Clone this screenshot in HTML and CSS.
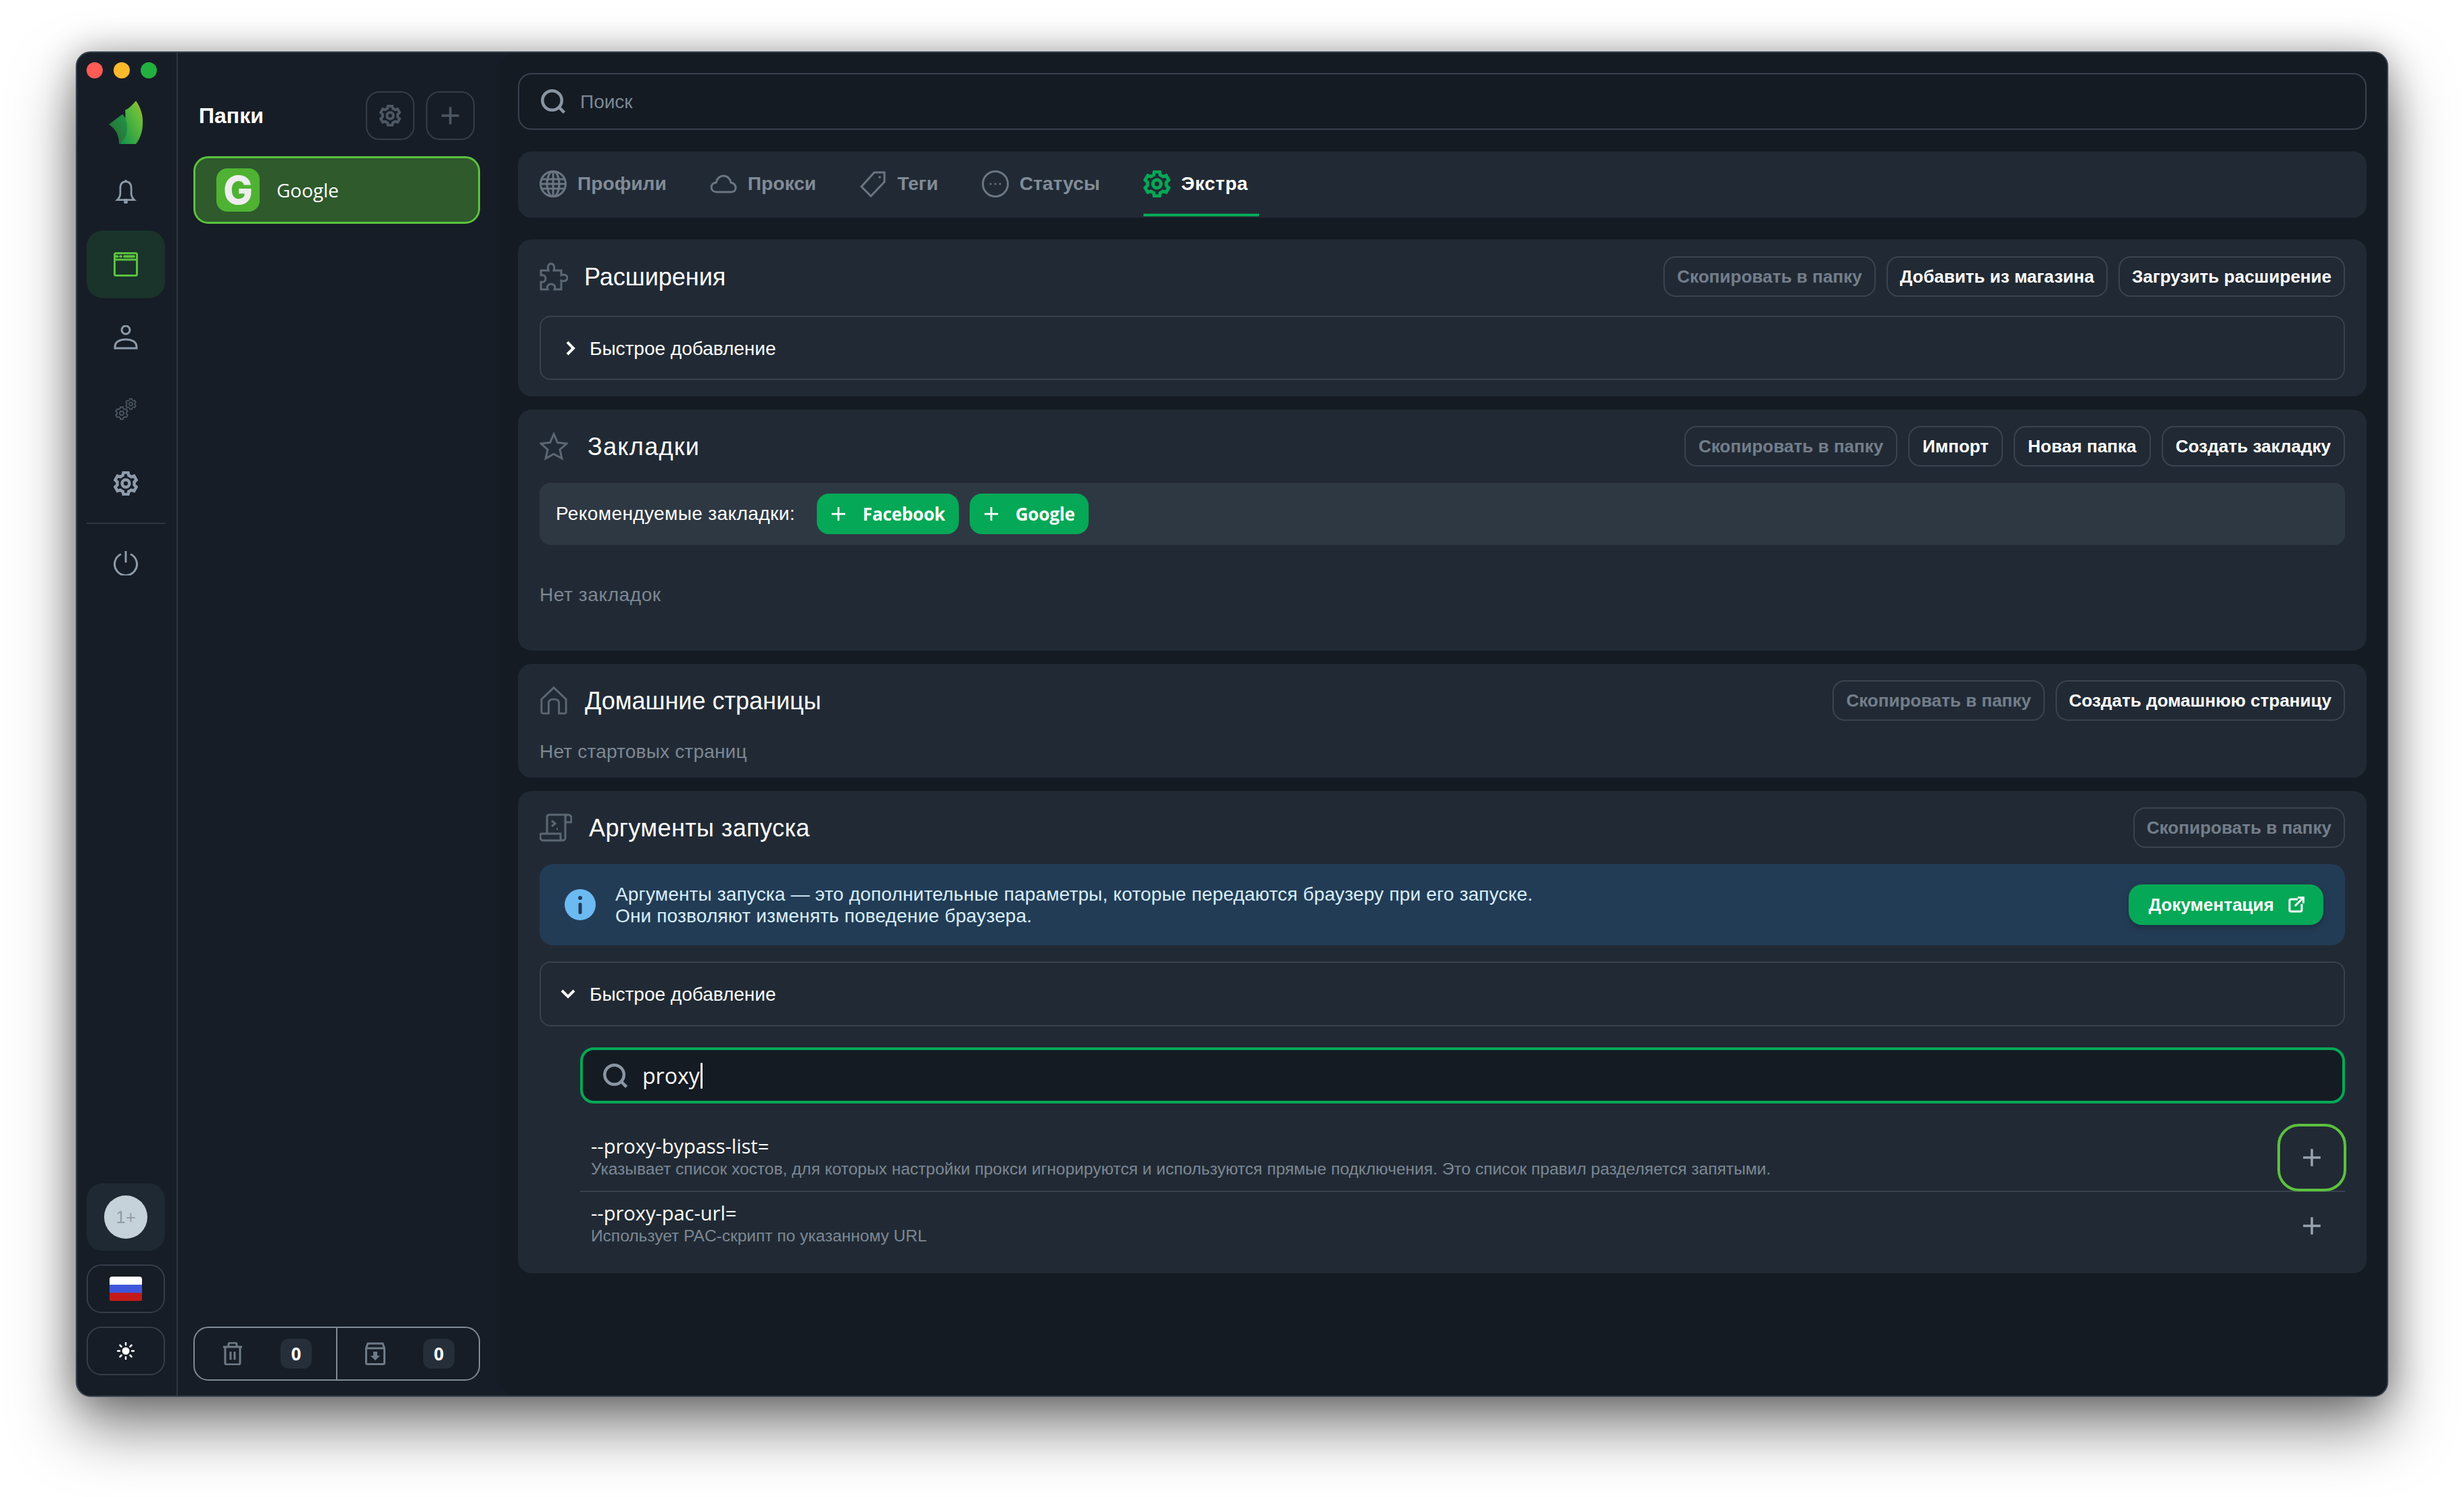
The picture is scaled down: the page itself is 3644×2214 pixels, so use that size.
FILE: index.html
```html
<!DOCTYPE html>
<html lang="ru">
<head>
<meta charset="utf-8">
<title>Экстра</title>
<link rel="stylesheet" href="styles.css">
</head>
<body>
<svg class="defs" aria-hidden="true">
  <defs>
    <linearGradient id="leaf" x1="1" y1="0" x2="0" y2="1"><stop offset="0" stop-color="#b5b62c"/><stop offset=".3" stop-color="#62bd3a"/><stop offset="1" stop-color="#0f8f4d"/></linearGradient>
    <linearGradient id="leafb" x1="1" y1="0" x2="0" y2="1"><stop offset="0" stop-color="#1f9a48"/><stop offset="1" stop-color="#2c5f33"/></linearGradient>
    <symbol id="i-gear" viewBox="0 0 24 24"><path d="M9.71 1.24L14.29 1.24L14.91 4.01L17.46 5.49L20.17 4.64L22.46 8.6L20.37 10.52L20.37 13.48L22.46 15.4L20.17 19.36L17.46 18.51L14.91 19.99L14.29 22.76L9.71 22.76L9.09 19.99L6.54 18.51L3.83 19.36L1.54 15.4L3.63 13.48L3.63 10.52L1.54 8.6L3.83 4.64L6.54 5.49L9.09 4.01Z"/><circle cx="12" cy="12" r="3.6"/></symbol>
    <symbol id="i-plus" viewBox="0 0 24 24"><path d="M12 1V23M1 12H23"/></symbol>
    <symbol id="i-search" viewBox="0 0 24 24"><circle cx="11" cy="11" r="9.5"/><path d="M17.8 17.8L23 23"/></symbol>
  </defs>
</svg>

<div class="window">
  <aside class="rail">
    <div class="lights"><span class="light red"></span><span class="light amber"></span><span class="light green"></span></div>
    <div class="logo">
      <svg viewBox="0 0 51 65" width="51" height="65"><path fill="url(#leaf)" d="M40 0C47 10 51 22 50 34C50 46 46 56 40 64L16 64C24 56 26 44 24 34C24 26 25 20 24 14C30 11 35 6 40 0Z"/><path fill="url(#leafb)" d="M20 20C24 24 27 30 27 40C27 50 24 58 15 64C15 50 10 42 0 35Z"/></svg>
    </div>
    <nav class="rail-nav">
      <a class="rail-item"><svg class="ico-36 stroke-rail" viewBox="0 0 36 40"><path d="M18 4C11 4 9 9 9 15V24C9 28 7 31 4 34H32C29 31 27 28 27 24V15C27 9 25 4 18 4Z"/><path d="M18 1V4"/><path class="thick" d="M18 35V38"/></svg></a>
      <a class="rail-item active"><svg class="ico-36 stroke-active" viewBox="0 0 36 36"><rect x="1.5" y="1.5" width="33" height="33" rx="2"/><path d="M2 11H34"/><path class="thick-b" d="M4.5 6.2H5.5M10 6.2H11M16 6.2H30"/></svg></a>
      <a class="rail-item"><svg class="ico-36 stroke-rail" viewBox="0 0 36 36"><circle cx="18" cy="7" r="6"/><path d="M2 34V32C2 24 10 21 18 21C26 21 34 24 34 32V34Z"/></svg></a>
      <a class="rail-item"><svg class="ico-gears stroke-dim" viewBox="0 0 32 36"><use href="#i-gear" x="0" y="12" width="20" height="20"/><use href="#i-gear" x="15" y="0" width="17" height="17"/></svg></a>
      <a class="rail-item"><svg class="ico-36 stroke-rail" viewBox="0 0 24 24"><use href="#i-gear"/></svg></a>
      <div class="rail-sep"></div>
      <a class="rail-item power"><svg class="ico-36 stroke-rail" viewBox="0 0 36 36"><path d="M11 4.5A16.5 16.5 0 1 0 25 4.5"/><path d="M18 0V17"/></svg></a>
    </nav>
    <div class="rail-bottom">
      <div class="avatar-box"><div class="avatar">1+</div></div>
      <div class="rail-btn"><div class="flag"><span class="f-w"></span><span class="f-b"></span><span class="f-r"></span></div></div>
      <div class="rail-btn">
        <svg class="ico-sun" viewBox="0 0 26 26"><circle class="sun-core" cx="13" cy="13" r="5.500"/><path d="M13 1V4M13 22V25M1 13H4M22 13H25M4.500 4.500L6.600 6.600M19.400 19.400L21.500 21.500M4.500 21.500L6.600 19.400M19.400 6.600L21.500 4.500"/></svg>
      </div>
    </div>
  </aside>

  <aside class="folders">
    <div class="folders-head">
      <h2 class="folders-title">Папки</h2>
      <div class="folders-actions">
        <button class="square-btn"><svg class="ico-32 stroke-dim" viewBox="0 0 24 24"><use href="#i-gear"/></svg></button>
        <button class="square-btn"><svg class="ico-28 stroke-dim" viewBox="0 0 24 24"><use href="#i-plus"/></svg></button>
      </div>
    </div>
    <div class="folder-item">
      <span class="folder-icon">G</span>
      <span class="folder-name">Google</span>
    </div>
    <div class="bin">
      <div class="bin-cell">
        <svg class="ico-bin stroke-bin" viewBox="0 0 30 34"><path d="M1 7H29M9 7V3C9 2 10 1 11 1H19C20 1 21 2 21 3V7M4 7V31C4 32 5 33 6 33H24C25 33 26 32 26 31V7M12 14V26M18 14V26"/></svg>
        <span class="chip">0</span>
      </div>
      <div class="bin-cell">
        <svg class="ico-bin stroke-bin" viewBox="0 0 30 34"><path d="M1.5 9V31C1.5 32 2.5 32.5 3.5 32.5H26.500C27.500 32.500 28.500 32 28.500 31V9L26 2H4ZM2 9H28"/><path class="fill-bin" d="M12 14H18V20H22L15 27L8 20H12Z"/></svg>
        <span class="chip">0</span>
      </div>
    </div>
  </aside>

  <main class="main">
    <div class="search">
      <svg class="ico-36 stroke-search" viewBox="0 0 24 24"><use href="#i-search"/></svg>
      <span class="search-ph">Поиск</span>
    </div>

    <nav class="tabs">
      <a class="tab">
        <svg class="ico-40 stroke-tab" viewBox="0 0 40 40"><circle cx="20" cy="20" r="18.500"/><ellipse cx="20" cy="20" rx="9" ry="18.500"/><path d="M3 13H37M3 27H37M20 2V38M1.500 20H38.500"/></svg>
        <span>Профили</span>
      </a>
      <a class="tab">
        <svg class="ico-40 stroke-tab" viewBox="0 0 40 40"><path d="M10 32C5 32 2 29 2 25C2 21 5 18 9 18C10 12 15 8 20 8C26 8 30 13 31 18C35 19 38 22 38 26C38 30 35 32 31 32Z"/></svg>
        <span>Прокси</span>
      </a>
      <a class="tab">
        <svg class="ico-40 stroke-tab" viewBox="0 0 40 40"><path d="M37 3L22 3L3 24L17 38L37 17Z"/><circle class="fill-tab" cx="30" cy="10" r="1.800"/></svg>
        <span>Теги</span>
      </a>
      <a class="tab">
        <svg class="ico-40 stroke-tab" viewBox="0 0 40 40"><circle cx="20" cy="20" r="18.500"/><circle class="fill-tab" cx="13" cy="20" r="1.500"/><circle class="fill-tab" cx="20" cy="20" r="1.500"/><circle class="fill-tab" cx="27" cy="20" r="1.500"/></svg>
        <span>Статусы</span>
      </a>
      <a class="tab tab-active">
        <svg class="ico-40 stroke-tab-on" viewBox="0 0 24 24"><use href="#i-gear"/></svg>
        <span>Экстра</span>
      </a>
    </nav>

    <section class="card card-ext">
      <header class="card-head">
        <div class="card-title">
          <svg class="ico-42 stroke-head" viewBox="0 0 42 42"><path d="M2 12H13C11 5 14 2 17 2C20 2 23 5 21 12H32V19C38 17 41 20 41 23C41 26 38 29 32 27V40H22C24 35 21 32 17 32C13 32 10 35 12 40H2V29C7 30 9 27 9 24C9 21 7 18 2 19Z"/></svg>
          <h3>Расширения</h3>
        </div>
        <div class="card-actions">
          <button class="btn btn-muted">Скопировать в папку</button>
          <button class="btn">Добавить из магазина</button>
          <button class="btn">Загрузить расширение</button>
        </div>
      </header>
      <div class="expander expander-top">
        <svg class="ico-chev stroke-white" viewBox="0 0 16 24"><path d="M3 3L12 12L3 21"/></svg>
        <span>Быстрое добавление</span>
      </div>
    </section>

    <section class="card">
      <header class="card-head">
        <div class="card-title">
          <svg class="ico-42 stroke-head" viewBox="0 0 42 40"><path d="M21 2L26.500 14.500L40 16L30 25L33 38L21 31.500L9 38L12 25L2 16L15.500 14.500Z"/></svg>
          <h3 class="title-star">Закладки</h3>
        </div>
        <div class="card-actions actions-roomy">
          <button class="btn btn-muted">Скопировать в папку</button>
          <button class="btn">Импорт</button>
          <button class="btn">Новая папка</button>
          <button class="btn">Создать закладку</button>
        </div>
      </header>
      <div class="recommend">
        <span class="recommend-label">Рекомендуемые закладки:</span>
        <button class="btn-green"><svg class="ico-22 stroke-white" viewBox="0 0 24 24"><use href="#i-plus"/></svg><span class="latin-b">Facebook</span></button>
        <button class="btn-green"><svg class="ico-22 stroke-white" viewBox="0 0 24 24"><use href="#i-plus"/></svg><span class="latin-b">Google</span></button>
      </div>
      <p class="empty empty-bookmarks">Нет закладок</p>
    </section>

    <section class="card">
      <header class="card-head">
        <div class="card-title">
          <svg class="ico-42 stroke-head" viewBox="0 0 42 44"><path d="M21 2L40 20V40C40 41 39 42 38 42H29V26C29 22 26 20 21 20C16 20 13 22 13 26V42H4C3 42 2 41 2 40V20Z"/></svg>
          <h3 class="title-home">Домашние страницы</h3>
        </div>
        <div class="card-actions">
          <button class="btn btn-muted">Скопировать в папку</button>
          <button class="btn">Создать домашнюю страницу</button>
        </div>
      </header>
      <p class="empty empty-home">Нет стартовых страниц</p>
    </section>

    <section class="card card-args">
      <header class="card-head">
        <div class="card-title">
          <svg class="ico-48 stroke-head" viewBox="0 0 48 42"><path d="M11 30V5C11 3 13 2 15 2H42C45 2 47 4 47 7V13H38V6C38 3 40 2 42 2M38 13V36C38 39 36 40 33 40H5C3 40 1 38 1 36V32C1 31 2 30 3 30H31V37C31 39 33 40 34 40"/><path d="M18 11L23 15L18 19M25 23H27"/></svg>
          <h3 class="title-args">Аргументы запуска</h3>
        </div>
        <div class="card-actions">
          <button class="btn btn-muted">Скопировать в папку</button>
        </div>
      </header>
      <div class="info">
        <svg class="ico-46" viewBox="0 0 46 46"><circle class="info-bg" cx="23" cy="23" r="23"/><circle class="info-fg" cx="23" cy="13" r="3"/><rect class="info-fg" x="20.500" y="20" width="5" height="17" rx="2.500"/></svg>
        <p class="info-text">Аргументы запуска — это дополнительные параметры, которые передаются браузеру при его запуске.<br>Они позволяют изменять поведение браузера.</p>
        <button class="btn-doc">
          <span>Документация</span>
          <svg class="ico-24 stroke-white" viewBox="0 0 24 24"><path d="M14 4H4C2.500 4 2 4.500 2 6V20C2 21.500 2.500 22 4 22H18C19.500 22 20 21.500 20 20V11M10 14L22 2M14 1.500H22.500V10"/></svg>
        </button>
      </div>
      <div class="expander">
        <svg class="ico-chev-d stroke-white" viewBox="0 0 24 16"><path d="M3 3L12 12L21 3"/></svg>
        <span>Быстрое добавление</span>
      </div>
      <div class="args">
        <div class="arg-search">
          <svg class="ico-36 stroke-search" viewBox="0 0 24 24"><use href="#i-search"/></svg>
          <span class="arg-value">proxy</span><span class="caret"></span>
        </div>
        <div class="arg-row arg-row-first">
          <div class="arg-text">
            <div class="arg-name">--proxy-bypass-list=</div>
            <div class="arg-desc">Указывает список хостов, для которых настройки прокси игнорируются и используются прямые подключения. Это список правил разделяется запятыми.</div>
          </div>
          <button class="arg-add arg-add-focus"><svg class="ico-28 stroke-plus" viewBox="0 0 24 24"><use href="#i-plus"/></svg></button>
        </div>
        <div class="arg-row arg-row-last">
          <div class="arg-text">
            <div class="arg-name">--proxy-pac-url=</div>
            <div class="arg-desc">Использует PAC-скрипт по указанному URL</div>
          </div>
          <button class="arg-add"><svg class="ico-28 stroke-plus" viewBox="0 0 24 24"><use href="#i-plus"/></svg></button>
        </div>
      </div>
    </section>
  </main>
</div>
</body>
</html>
```
FILE: styles.css
```css
* { box-sizing: border-box; }
html, body { margin: 0; height: 100%; }
body {
  background: #fff;
  padding: 76px 112px 148px;
  font-family: "Liberation Sans", Arial, sans-serif;
  font-size: 28px;
  color: #fff;
  overflow: hidden;
}
.defs { position: absolute; width: 0; height: 0; }
h2, h3, p { margin: 0; font-weight: normal; }
button { font-family: inherit; color: inherit; background: none; padding: 0; margin: 0; border: 0; }
svg { display: block; flex: none; fill: none; stroke-width: 3; }

.ico-22 { width: 22px; height: 22px; }
.ico-24 { width: 24px; height: 24px; }
.ico-28 { width: 28px; height: 28px; }
.ico-32 { width: 32px; height: 32px; }
.ico-36 { width: 36px; height: 36px; }
.ico-40 { width: 40px; height: 40px; }
.ico-42 { width: 42px; height: 42px; }
.ico-46 { width: 46px; height: 46px; }
.ico-48 { width: 48px; height: 42px; }
.ico-gears { width: 32px; height: 36px; stroke-width: 2.200; }
.ico-bin { width: 30px; height: 34px; }
.ico-sun { width: 26px; height: 26px; stroke: #fff; stroke-linecap: round; stroke-width: 2.500; }
.sun-core { fill: #fff; stroke: none; }
.ico-chev { width: 16px; height: 24px; stroke-width: 4; }
.ico-chev-d { width: 24px; height: 16px; stroke-width: 4; }

.stroke-rail { stroke: #8e9baa; }
.stroke-active { stroke: #5cc13e; }
.stroke-dim { stroke: #4d5763; }
.stroke-bin { stroke: #6f7a87; }
.stroke-search { stroke: #8a95a2; }
.stroke-tab { stroke: #6a7582; }
.stroke-tab-on { stroke: #05a856; }
.stroke-head { stroke: #5c6774; }
.stroke-white { stroke: #fff; }
.stroke-plus { stroke: #98a3af; }
.fill-bin { fill: #6f7a87; stroke: none; }
.fill-tab { fill: #6a7582; stroke: none; }
.thick { stroke-width: 6; stroke-linecap: round; }
.thick-b { stroke-width: 4; stroke-linecap: round; }
.info-bg { fill: #6cbaf2; }
.info-fg { fill: #1f3c56; }

.window {
  display: flex;
  height: 100%;
  background: #161d26;
  border: 2px solid #3a424d;
  border-radius: 22px;
  box-shadow: 0 44px 90px rgba(0, 0, 0, .5), 0 0 50px rgba(0, 0, 0, .28);
  overflow: hidden;
}

/* Rail */
.rail {
  width: 149px;
  flex: none;
  padding: 0 17px 30px 14px;
  border-right: 2px solid #2c3540;
  display: flex;
  flex-direction: column;
  align-items: stretch;
}
.lights { display: flex; gap: 16px; margin-top: 14px; }
.light { width: 24px; height: 24px; border-radius: 50%; }
.red { background: #fe5a56; }
.amber { background: #fdb92c; }
.green { background: #22b13f; }
.logo { display: flex; justify-content: center; margin-top: 33px; height: 65px; }
.rail-nav { display: flex; flex-direction: column; gap: 8px; margin-top: 19px; }
.rail-item {
  height: 100px;
  border-radius: 24px;
  display: flex;
  align-items: center;
  justify-content: center;
}
.rail-item.active { background: #1a332b; }
.rail-sep { height: 2px; background: #2c3540; }
.rail-bottom { margin-top: auto; display: flex; flex-direction: column; gap: 20px; }
.avatar-box {
  height: 100px;
  border-radius: 24px;
  background: #1f2933;
  display: flex;
  align-items: center;
  justify-content: center;
}
.avatar {
  width: 64px;
  height: 64px;
  border-radius: 50%;
  background: #c6d2d9;
  color: #8f9ca6;
  font-size: 26px;
  display: flex;
  align-items: center;
  justify-content: center;
}
.rail-btn {
  height: 72px;
  border: 2.500px solid #343d49;
  border-radius: 22px;
  display: flex;
  align-items: center;
  justify-content: center;
}
.flag { width: 48px; height: 36px; border-radius: 4px 4px 2px 2px; overflow: hidden; display: flex; flex-direction: column; }
.flag span { flex: 1; }
.f-w { background: #fff; }
.f-b { background: #3f57da; }
.f-r { background: #c41a1a; }

/* Folders */
.folders {
  width: 472px;
  flex: none;
  padding: 57px 25px 22px 23px;
  display: flex;
  flex-direction: column;
  background: #161d26;
}
.folders-head { display: flex; align-items: center; justify-content: space-between; padding: 0 8px; height: 72px; }
.folders-title { font-size: 32px; font-weight: bold; }
.folders-actions { display: flex; gap: 17px; }
.square-btn {
  width: 72px;
  height: 72px;
  border: 2.500px solid #343d49;
  border-radius: 20px;
  display: flex;
  align-items: center;
  justify-content: center;
}
.folder-item {
  margin-top: 24px;
  height: 100px;
  background: #2e5a2c;
  border: 3px solid #5cc13e;
  border-radius: 22px;
  padding: 0 31px;
  display: flex;
  align-items: center;
  gap: 25px;
}
.folder-icon {
  width: 64px;
  height: 64px;
  border-radius: 16px;
  background: #4fb233;
  color: #eee;
  font-family: "Inter", sans-serif;
  font-weight: 800;
  font-size: 58px;
  display: flex;
  align-items: center;
  justify-content: center;
}
.folder-name { font-family: "Open Sans", sans-serif; font-size: 28px; }
.bin {
  margin-top: auto;
  height: 80px;
  border: 2.500px solid #7f8a96;
  border-radius: 22px;
  display: flex;
}
.bin-cell {
  flex: 1;
  display: flex;
  align-items: center;
  justify-content: space-between;
  padding: 0 36px 0 41px;
}
.bin-cell + .bin-cell { border-left: 2.500px solid #7f8a96; padding-left: 41px; }
.chip {
  width: 46px;
  height: 44px;
  border-radius: 12px;
  background: #262f39;
  font-family: "Open Sans", sans-serif;
  font-weight: 700;
  font-size: 26px;
  display: flex;
  align-items: center;
  justify-content: center;
}

/* Main */
.main {
  flex: 1;
  min-width: 0;
  padding: 30px 30px 0 31px;
  background: #141b23;
  border-radius: 30px 0 0 30px;
  display: flex;
  flex-direction: column;
  gap: 20px;
}
.search {
  height: 84px;
  flex: none;
  margin-bottom: 12px;
  border: 2.500px solid #38414d;
  border-radius: 20px;
  display: flex;
  align-items: center;
  gap: 22px;
  padding: 0 32px;
}
.search-ph { color: #7d8894; font-size: 28px; padding-top: 2px; }
.tabs {
  height: 98px;
  flex: none;
  background: #212a34;
  border-radius: 20px;
  padding-left: 32px;
  display: flex;
  gap: 48px;
  margin-bottom: 12px;
}
.tab {
  position: relative;
  display: flex;
  align-items: center;
  gap: 16px;
  padding-right: 16px;
  padding-bottom: 3px;
  font-weight: bold;
  font-size: 28px;
  letter-spacing: .1px;
  color: #818c98;
}
.tab-active { color: #fff; letter-spacing: .6px; }
.tab-active::after {
  content: "";
  position: absolute;
  left: 0;
  right: 0;
  bottom: 2px;
  height: 4px;
  background: #05a856;
}
.card {
  background: #212a34;
  border-radius: 20px;
  padding: 24px 32px;
  flex: none;
}
.card-ext { padding-top: 25px; }
.card-args { padding-bottom: 20px; }
.card-head { display: flex; align-items: center; justify-content: space-between; height: 60px; }
.card-title { display: flex; align-items: center; gap: 24px; font-size: 36px; }
.card-title h3 { font-size: 36px; padding-top: 2px; }
.title-star { margin-left: 5px; letter-spacing: 1.300px; }
.title-home { margin-left: 1px; }
.title-args { margin-left: 1px; letter-spacing: .4px; }
.card-actions { display: flex; gap: 16px; }
.btn {
  height: 60px;
  padding: 0 18px;
  border: 2px solid #3a4450;
  border-radius: 18px;
  font-weight: bold;
  font-size: 26px;
  white-space: nowrap;
}
.actions-roomy .btn { padding: 0 19px; }
.btn-muted { color: #737e8b; }
.expander {
  margin-top: 24px;
  height: 96px;
  border: 2px solid #38414d;
  border-radius: 16px;
  display: flex;
  align-items: center;
  padding: 0 28px;
  gap: 20px;
}
.expander span { padding-top: 2px; }
.expander-top { margin-top: 28px; height: 95px; padding-left: 36px; gap: 20px; }
.recommend {
  margin-top: 24px;
  height: 92px;
  background: #2e3843;
  border-radius: 16px;
  padding: 0 24px;
  display: flex;
  align-items: center;
  gap: 16px;
}
.recommend-label { margin-right: 16px; letter-spacing: .4px; }
.btn-green {
  height: 60px;
  padding: 0 20px 0 21px;
  background: #05a856;
  border-radius: 18px;
  display: flex;
  align-items: center;
  gap: 25px;
}
.latin-b { font-family: "Open Sans", sans-serif; font-weight: 700; font-size: 26px; letter-spacing: -.2px; }
.empty { color: #7d8894; line-height: 40px; font-size: 28px; letter-spacing: .2px; }
.empty-bookmarks { margin: 54px 0 38px; letter-spacing: .6px; }
.empty-home { margin: 26px 0 -6px; }
.info {
  margin-top: 24px;
  height: 120px;
  background: #233c56;
  border-radius: 20px;
  padding: 0 32px 0 37px;
  display: flex;
  align-items: center;
  gap: 29px;
}
.info-text { flex: 1; line-height: 32px; font-size: 28px; letter-spacing: .16px; padding-top: 2px; color: #d8effc; }
.btn-doc {
  height: 60px;
  padding: 0 28px 0 29px;
  background: #05a856;
  border-radius: 20px;
  box-shadow: 0 4px 10px rgba(0, 0, 0, .25);
  display: flex;
  align-items: center;
  gap: 21px;
  font-weight: bold;
  font-size: 26px;
}
.args { margin-left: 60px; margin-top: 31px; }
.arg-search {
  height: 83px;
  background: #141b23;
  border: 4px solid #05a856;
  border-radius: 20px;
  display: flex;
  align-items: center;
  padding: 0 30px;
}
.arg-value { margin-left: 22px; font-family: "Open Sans", sans-serif; font-size: 32px; }
.caret { width: 3px; height: 38px; background: #fff; margin-left: 1px; }
.arg-row { display: flex; align-items: center; justify-content: space-between; height: 100px; padding-left: 16px; }
.arg-row-first { margin-top: 30px; height: 101px; border-bottom: 2px solid #38414d; align-items: flex-start; }
.arg-row-first .arg-text { margin-top: 15px; }
.arg-row-last .arg-text { padding-bottom: 6px; }
.arg-name { font-family: "Open Sans", sans-serif; font-size: 29px; line-height: 36px; }
.arg-desc { color: #7d8894; font-size: 24.500px; line-height: 32px; }
.arg-add {
  width: 102px;
  height: 100px;
  margin-right: -2px;
  border: 4px solid transparent;
  border-radius: 32px;
  display: flex;
  align-items: center;
  justify-content: center;
  background: #212a34;
  position: relative;
}
.arg-add-focus { border-color: #5cc13e; }
```
